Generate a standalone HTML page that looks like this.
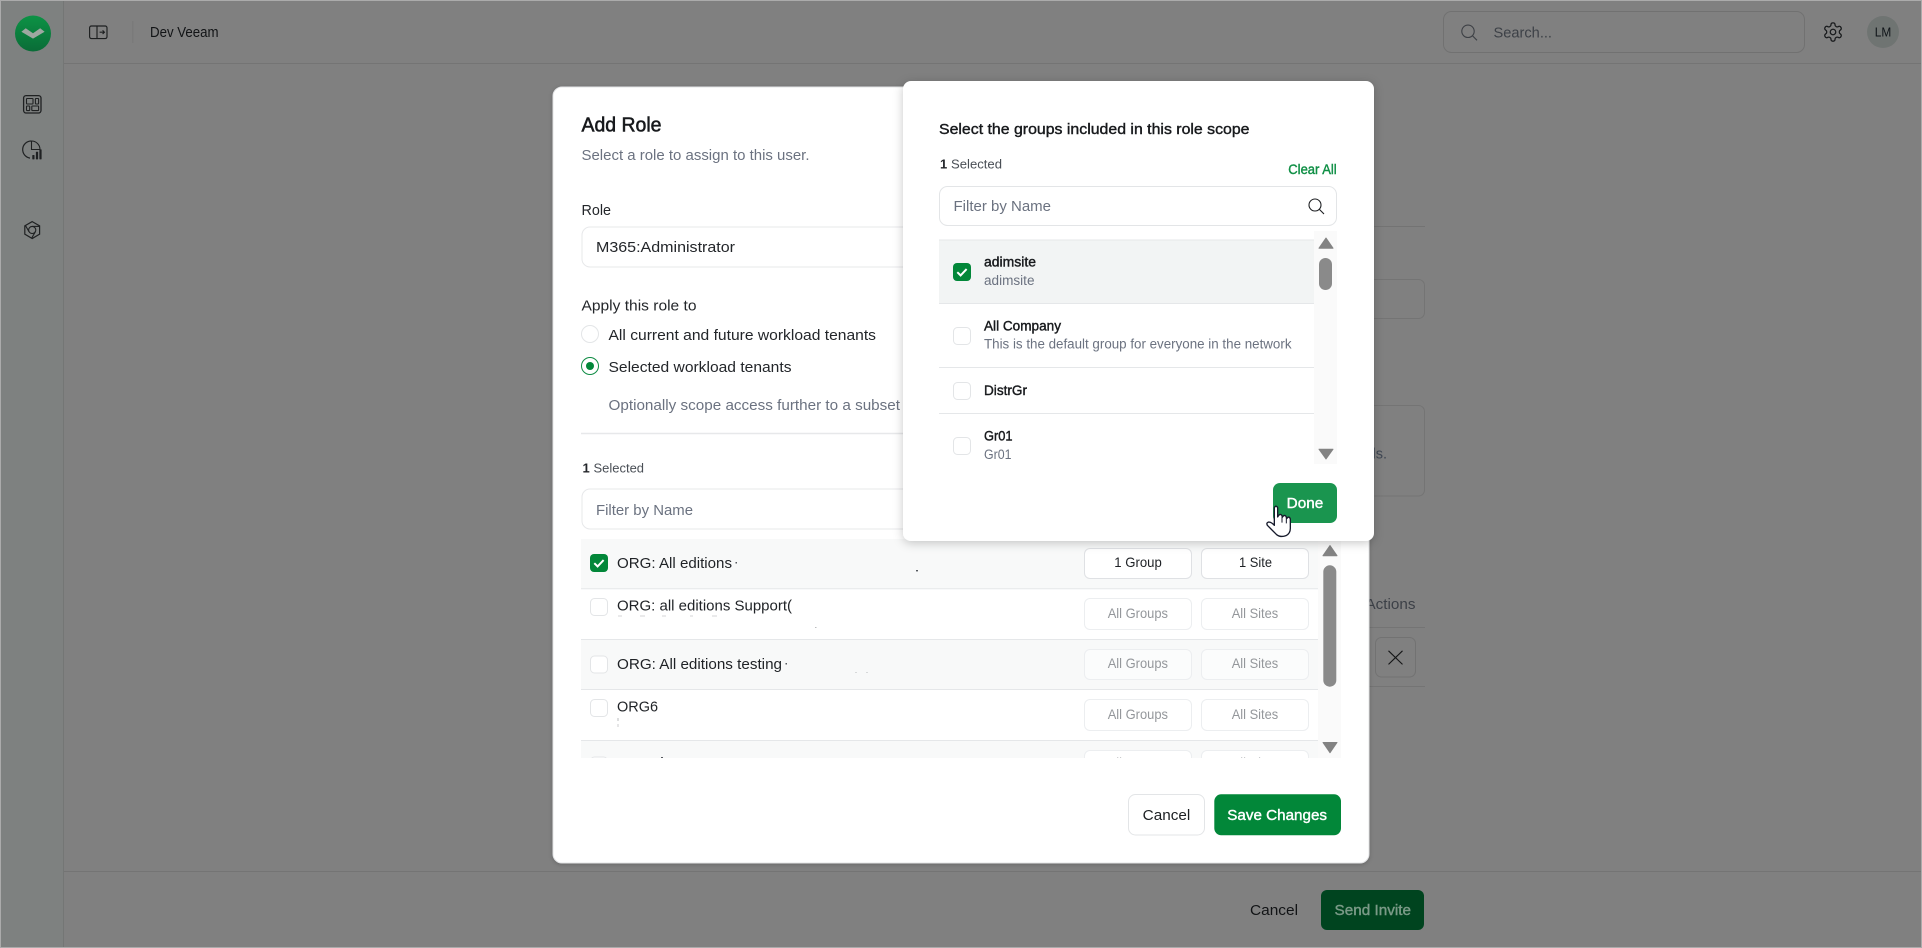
<!DOCTYPE html>
<html lang="en">
<head>
<meta charset="utf-8">
<title>Add Role</title>
<style>
html,body{margin:0;padding:0;width:1922px;height:948px;overflow:hidden;background:#808080}
svg{display:block;filter:blur(.3px)}
text{font-family:"Liberation Sans",Arial,sans-serif;white-space:pre}
.m{stroke-width:.4;paint-order:stroke}
</style>
</head>
<body>
<svg xmlns="http://www.w3.org/2000/svg" width="1922" height="948" viewBox="0 0 1922 948">
<defs>
<linearGradient id="lg" x1="0" y1="0" x2="0" y2="1"><stop offset="0" stop-color="#0c9245"/><stop offset="1" stop-color="#0a6c37"/></linearGradient>
<filter id="sh" x="-10%" y="-10%" width="120%" height="120%"><feDropShadow dx="0" dy="2" stdDeviation="5" flood-color="#000" flood-opacity=".22"/></filter>
<filter id="sh2" x="-5%" y="-5%" width="110%" height="110%"><feDropShadow dx="0" dy="1" stdDeviation="2" flood-color="#000" flood-opacity=".2"/></filter>
<clipPath id="listclip"><rect x="581" y="530" width="760" height="228"/></clipPath>
<clipPath id="popclip"><rect x="939" y="231" width="398" height="233"/></clipPath>
</defs>

<!-- page frame -->
<rect width="1922" height="948" fill="#808080"/>
<rect x="1" y="1" width="63" height="946" fill="#7e8180"/>
<line x1="63.5" y1="1" x2="63.5" y2="947" stroke="#747675"/>
<line x1="64" y1="63.5" x2="1921" y2="63.5" stroke="#747474"/>
<line x1="64" y1="871.5" x2="1921" y2="871.5" stroke="#747474"/>
<rect x=".5" y=".5" width="1921" height="947" fill="none" stroke="#ababab"/>

<!-- logo -->
<circle cx="33" cy="33.5" r="18" fill="url(#lg)"/>
<polygon points="21.4,31.7 25.7,28.3 33,33.3 40.2,28.3 44.6,31.7 33,38.6" fill="#9ea8a1"/>

<!-- sidebar icons -->
<g fill="none" stroke="#1f2122" stroke-width="1.1">
<rect x="23.6" y="95.6" width="17.4" height="17.4" rx="2.5" stroke-width="1.3"/>
<rect x="26.5" y="98.5" width="6.5" height="5.5" rx=".6"/>
<rect x="35.4" y="98.5" width="3.2" height="5.5" rx=".6"/>
<rect x="26.5" y="106" width="3.2" height="4.6" rx=".6"/>
<rect x="31.8" y="106" width="6.8" height="4.6" rx=".6"/>
<path d="M31 141a8.6 8.6 0 0 0-1 17.1" stroke-width="1.2"/>
<path d="M31.5 141a8.5 8.5 0 0 1 8.5 8.5h-8.5z"/>
<path d="M32.2 221.6l7.4 4.2v8.4l-7.4 4.3-7.4-4.3v-8.4z" stroke-width="1.2"/>
<circle cx="32.2" cy="230" r="3.6"/>
<path id="blade" d="M32.2 226.4L39.2 226.4"/>
<path d="M32.2 226.4L39.2 226.4" transform="rotate(120 32.2 230)"/>
<path d="M32.2 226.4L39.2 226.4" transform="rotate(240 32.2 230)"/>
</g>
<g fill="#1f2122">
<rect x="32.3" y="155" width="2.2" height="4.4" rx=".5"/>
<rect x="35.9" y="151.8" width="2.2" height="7.6" rx=".5"/>
<rect x="39.4" y="149.4" width="2.2" height="10" rx=".5"/>
</g>

<!-- header -->
<g fill="none" stroke="#1d1f20" stroke-width="1.15">
<rect x="89.6" y="26" width="17.4" height="12.6" rx="1.8"/>
<line x1="97" y1="26" x2="97" y2="38.6"/>
<path d="M99.6 32.2h4.7M102.6 30.4l1.8 1.8-1.8 1.8"/>
</g>
<line x1="132.8" y1="21" x2="132.8" y2="43" stroke="#777"/>
<text x="150" y="37" font-size="14.5" fill="#121416" textLength="68.6" lengthAdjust="spacingAndGlyphs">Dev Veeam</text>

<rect x="1443.5" y="11.5" width="361" height="41" rx="8" fill="#808080" stroke="#717171"/>
<g fill="none" stroke="#3d4045" stroke-width="1.1"><circle cx="1468" cy="31.3" r="6.2"/><line x1="1472.6" y1="35.9" x2="1477" y2="40.3"/></g>
<text x="1493.5" y="37.4" font-size="15" fill="#3d4147" textLength="58.5" lengthAdjust="spacingAndGlyphs">Search...</text>
<g transform="translate(1822,21) scale(.917)" fill="none" stroke="#191b1d" stroke-width="1.4">
<path d="M12.22 2h-.44a2 2 0 0 0-2 2v.18a2 2 0 0 1-1 1.73l-.43.25a2 2 0 0 1-2 0l-.15-.08a2 2 0 0 0-2.73.73l-.22.38a2 2 0 0 0 .73 2.73l.15.1a2 2 0 0 1 1 1.72v.51a2 2 0 0 1-1 1.74l-.15.09a2 2 0 0 0-.73 2.73l.22.38a2 2 0 0 0 2.73.73l.15-.08a2 2 0 0 1 2 0l.43.25a2 2 0 0 1 1 1.73V20a2 2 0 0 0 2 2h.44a2 2 0 0 0 2-2v-.18a2 2 0 0 1 1-1.73l.43-.25a2 2 0 0 1 2 0l.15.08a2 2 0 0 0 2.73-.73l.22-.39a2 2 0 0 0-.73-2.73l-.15-.08a2 2 0 0 1-1-1.74v-.5a2 2 0 0 1 1-1.74l.15-.09a2 2 0 0 0 .73-2.73l-.22-.38a2 2 0 0 0-2.73-.73l-.15.08a2 2 0 0 1-2 0l-.43-.25a2 2 0 0 1-1-1.73V4a2 2 0 0 0-2-2z"/>
<circle cx="12" cy="12" r="3"/>
</g>
<circle cx="1883" cy="32" r="16" fill="#6f7472"/>
<text x="1874.8" y="36.5" font-size="12.5" fill="#0f1418" textLength="16.5" lengthAdjust="spacingAndGlyphs">LM</text>

<!-- page background content -->
<line x1="1300" y1="226.5" x2="1425" y2="226.5" stroke="#737373"/>
<rect x="1300" y="279.5" width="124.5" height="39" rx="6" fill="none" stroke="#747474"/>
<rect x="1300" y="405.5" width="124.5" height="90.5" rx="6" fill="none" stroke="#747474"/>
<text x="1387" y="458.5" font-size="14.5" fill="#3f4753" text-anchor="end">ds.</text>
<text x="1365.5" y="609" font-size="15" fill="#3c4047" textLength="50" lengthAdjust="spacingAndGlyphs">Actions</text>
<line x1="1300" y1="627.5" x2="1425" y2="627.5" stroke="#747474"/>
<line x1="1300" y1="686.5" x2="1425" y2="686.5" stroke="#747474"/>
<rect x="1375.5" y="637.5" width="40" height="39.5" rx="6" fill="#808080" stroke="#727272"/>
<path d="M1388.5 650.8L1402.5 664.4M1402.5 650.8L1388.5 664.4" stroke="#141516" stroke-width="1.1" fill="none"/>

<text x="1250" y="914.8" font-size="15" fill="#121416" textLength="48" lengthAdjust="spacingAndGlyphs">Cancel</text>
<rect x="1321" y="890" width="103" height="40" rx="6" fill="#00441f"/>
<text x="1334.5" y="914.8" font-size="15" fill="#7a9a87" class="m" stroke="#7a9a87" textLength="76.5" lengthAdjust="spacingAndGlyphs">Send Invite</text>

<!-- modal -->
<rect x="553" y="87" width="816" height="776" rx="9" fill="#fff" stroke="#e3e4e6" stroke-width="1" filter="url(#sh2)"/>
<text x="581.5" y="131.7" font-size="20" fill="#17191c" stroke-width=".55" stroke="#17191c" textLength="80" lengthAdjust="spacingAndGlyphs">Add Role</text>
<text x="581.5" y="160" font-size="15" fill="#6b7280" textLength="228" lengthAdjust="spacingAndGlyphs">Select a role to assign to this user.</text>
<text x="581.5" y="215" font-size="15" fill="#23262a" textLength="29.5" lengthAdjust="spacingAndGlyphs">Role</text>
<rect x="582" y="227" width="759" height="40" rx="8" fill="#fff" stroke="#e7e8ea"/>
<text x="596" y="252" font-size="15" fill="#23262a" textLength="139" lengthAdjust="spacingAndGlyphs">M365:Administrator</text>
<text x="581.5" y="310.7" font-size="15" fill="#23262a" textLength="115" lengthAdjust="spacingAndGlyphs">Apply this role to</text>
<circle cx="590" cy="334" r="8.5" fill="#fff" stroke="#e3e5e7"/>
<text x="608.5" y="340" font-size="15" fill="#23262a" textLength="267.5" lengthAdjust="spacingAndGlyphs">All current and future workload tenants</text>
<circle cx="590" cy="366" r="8.5" fill="#fff" stroke="#0f8c44"/>
<circle cx="590" cy="366" r="4" fill="#028739"/>
<text x="608.5" y="372" font-size="15" fill="#23262a" textLength="183" lengthAdjust="spacingAndGlyphs">Selected workload tenants</text>
<text x="608.5" y="410" font-size="15" fill="#6b7280" textLength="291.5" lengthAdjust="spacingAndGlyphs">Optionally scope access further to a subset</text>
<line x1="581" y1="433.5" x2="1341" y2="433.5" stroke="#e7e8ea" stroke-width="1.5"/>
<text x="582.5" y="472.7" font-size="13" fill="#23262a" font-weight="700">1</text>
<text x="593.5" y="472.7" font-size="13" fill="#4a4f56" textLength="50.5" lengthAdjust="spacingAndGlyphs">Selected</text>
<rect x="582" y="489" width="759" height="40" rx="8" fill="#fff" stroke="#e7e8ea"/>
<text x="596" y="514.8" font-size="15" fill="#6b7280" textLength="97" lengthAdjust="spacingAndGlyphs">Filter by Name</text>

<!-- roles list -->
<g clip-path="url(#listclip)">
<rect x="581" y="539" width="737" height="49.5" fill="#f8f9f9"/>
<rect x="581" y="640" width="737" height="49.5" fill="#f8f9f9"/>
<rect x="581" y="741" width="737" height="20" fill="#f8f9f9"/>
<g stroke="#e5e7e9">
<line x1="581" y1="588.8" x2="1318" y2="588.8"/>
<line x1="581" y1="639.5" x2="1318" y2="639.5"/>
<line x1="581" y1="689.5" x2="1318" y2="689.5"/>
<line x1="581" y1="740.5" x2="1318" y2="740.5"/>
</g>
<rect x="590" y="554" width="18" height="18" rx="4" fill="#028739"/>
<path d="M594.3 563.2l3.3 3.2 6-6.3" fill="none" stroke="#fff" stroke-width="2"/>
<g fill="#fff" stroke="#e3e5e7">
<rect x="590.5" y="598.5" width="17" height="17" rx="4"/>
<rect x="590.5" y="656" width="17" height="17" rx="4"/>
<rect x="590.5" y="699.5" width="17" height="17" rx="4"/>
<rect x="590.5" y="757" width="17" height="17" rx="4"/>
</g>
<g font-size="15" fill="#1f2226">
<text x="617" y="568" textLength="115" lengthAdjust="spacingAndGlyphs">ORG: All editions</text>
<text x="617" y="610.7" textLength="175" lengthAdjust="spacingAndGlyphs">ORG: all editions Support(</text>
<text x="617" y="669" textLength="165" lengthAdjust="spacingAndGlyphs">ORG: All editions testing</text>
<text x="617" y="711.7" textLength="41" lengthAdjust="spacingAndGlyphs">ORG6</text>
</g>
<g fill="#55595f">
<rect x="735.5" y="562" width="1.5" height="1.5"/>
<rect x="785.5" y="663" width="1.5" height="1.5"/>
<rect x="916" y="570" width="2" height="1.4"/>
<rect x="815" y="627" width="1.5" height="1" opacity=".4"/>
<rect x="855" y="672" width="2" height="1" opacity=".2"/>
<rect x="866" y="672" width="2" height="1" opacity=".2"/>
<rect x="617.5" y="718" width="1" height="3" opacity=".4"/>
<rect x="617.5" y="724" width="1" height="3" opacity=".3"/>
<rect x="618" y="615.5" width="4" height="1" opacity=".25"/>
<rect x="640" y="615.5" width="5" height="1" opacity=".25"/>
<rect x="662" y="615.5" width="4" height="1" opacity=".25"/>
<rect x="690" y="615.5" width="3" height="1" opacity=".25"/>
<rect x="712" y="615.5" width="5" height="1" opacity=".25"/>
<rect x="661" y="757" width="2" height="1"/>
</g>
<g fill="#fff" stroke="#dfe1e4">
<rect x="1084.5" y="548.5" width="107" height="30" rx="5.5"/>
<rect x="1201.5" y="548.5" width="107" height="30" rx="5.5"/>
</g>
<g fill="#fff" stroke="#eceef0">
<rect x="1084.5" y="598.5" width="107" height="31" rx="5.5"/>
<rect x="1201.5" y="598.5" width="107" height="31" rx="5.5"/>
<rect x="1084.5" y="649.5" width="107" height="30" rx="5.5" fill="#fbfcfc"/>
<rect x="1201.5" y="649.5" width="107" height="30" rx="5.5" fill="#fbfcfc"/>
<rect x="1084.5" y="699.5" width="107" height="31" rx="5.5"/>
<rect x="1201.5" y="699.5" width="107" height="31" rx="5.5"/>
<rect x="1084.5" y="750.5" width="107" height="31" rx="5.5"/>
<rect x="1201.5" y="750.5" width="107" height="31" rx="5.5"/>
</g>
<g font-size="14" fill="#1f2226">
<text x="1114.3" y="566.8" textLength="47.5" lengthAdjust="spacingAndGlyphs">1 Group</text>
<text x="1239" y="566.8" textLength="33" lengthAdjust="spacingAndGlyphs">1 Site</text>
</g>
<g font-size="14" fill="#94979b">
<text x="1107.7" y="618.2" textLength="60.3" lengthAdjust="spacingAndGlyphs">All Groups</text>
<text x="1231.7" y="618.2" textLength="46.5" lengthAdjust="spacingAndGlyphs">All Sites</text>
<text x="1107.7" y="668.2" textLength="60.3" lengthAdjust="spacingAndGlyphs">All Groups</text>
<text x="1231.7" y="668.2" textLength="46.5" lengthAdjust="spacingAndGlyphs">All Sites</text>
<text x="1107.7" y="718.8" textLength="60.3" lengthAdjust="spacingAndGlyphs">All Groups</text>
<text x="1231.7" y="718.8" textLength="46.5" lengthAdjust="spacingAndGlyphs">All Sites</text>
<text x="1107.7" y="767.5" textLength="60.3" lengthAdjust="spacingAndGlyphs">All Groups</text>
<text x="1231.7" y="767.5" textLength="46.5" lengthAdjust="spacingAndGlyphs">All Sites</text>
</g>
<rect x="1318" y="535" width="23" height="223" fill="#fafafa"/>
<polygon points="1330,545.5 1337,555.7 1323,555.7" fill="#838383" stroke="#838383" stroke-linejoin="round"/>
<rect x="1323.3" y="565.3" width="13" height="121.4" rx="6.5" fill="#8a8a8a"/>
<polygon points="1323,742.5 1337,742.5 1330,752.7" fill="#838383" stroke="#838383" stroke-linejoin="round"/>
</g>

<!-- modal footer -->
<rect x="1128.5" y="794.5" width="76" height="40.5" rx="7" fill="#fff" stroke="#e3e5e7"/>
<text x="1142.7" y="820" font-size="15" fill="#1c1f22" textLength="47.6" lengthAdjust="spacingAndGlyphs">Cancel</text>
<rect x="1214.3" y="794.3" width="126.7" height="41" rx="7" fill="#028739"/>
<text x="1227.3" y="820" font-size="15" fill="#fff" class="m" stroke="#fff" textLength="99.7" lengthAdjust="spacingAndGlyphs">Save Changes</text>

<!-- popover -->
<rect x="903" y="81" width="471" height="460" rx="8" fill="#fff" filter="url(#sh)"/>
<text x="939" y="134" font-size="15" fill="#17191c" class="m" stroke="#17191c" textLength="310.5" lengthAdjust="spacingAndGlyphs">Select the groups included in this role scope</text>
<text x="940" y="168.5" font-size="13" fill="#23262a" font-weight="700">1</text>
<text x="951" y="168.5" font-size="13" fill="#4a4f56" textLength="51" lengthAdjust="spacingAndGlyphs">Selected</text>
<text x="1288.3" y="174" font-size="13.5" fill="#0f8f45" class="m" stroke="#0f8f45" textLength="48.4" lengthAdjust="spacingAndGlyphs">Clear All</text>
<rect x="939.5" y="186.5" width="397" height="39" rx="8" fill="#fff" stroke="#e3e5e7"/>
<text x="953.5" y="211" font-size="15" fill="#6b7280" textLength="97.5" lengthAdjust="spacingAndGlyphs">Filter by Name</text>
<g fill="none" stroke="#1e2023" stroke-width="1.1"><circle cx="1315" cy="205" r="6"/><line x1="1319.4" y1="209.4" x2="1324" y2="214"/></g>

<g clip-path="url(#popclip)">
<rect x="939" y="240" width="375" height="63.3" fill="#f2f4f4"/>
<g stroke="#e5e7e9">
<line x1="939" y1="240" x2="1314" y2="240"/>
<line x1="939" y1="303.5" x2="1314" y2="303.5"/>
<line x1="939" y1="367.5" x2="1314" y2="367.5"/>
<line x1="939" y1="413.5" x2="1314" y2="413.5"/>
</g>
<rect x="953" y="263" width="18" height="18" rx="4" fill="#028739"/>
<path d="M957.3 272.2l3.3 3.2 6-6.3" fill="none" stroke="#fff" stroke-width="2"/>
<g fill="#fff" stroke="#e3e5e7">
<rect x="953.5" y="327.5" width="17" height="17" rx="4"/>
<rect x="953.5" y="382.5" width="17" height="17" rx="4"/>
<rect x="953.5" y="437.5" width="17" height="17" rx="4"/>
</g>
<g font-size="13.5" fill="#17191c" class="m" stroke="#17191c">
<text x="984" y="266.7" textLength="52" lengthAdjust="spacingAndGlyphs">adimsite</text>
<text x="984" y="330.7" textLength="77" lengthAdjust="spacingAndGlyphs">All Company</text>
<text x="984" y="395" textLength="43" lengthAdjust="spacingAndGlyphs">DistrGr</text>
<text x="984" y="440.7" textLength="28.5" lengthAdjust="spacingAndGlyphs">Gr01</text>
</g>
<g font-size="13.5" fill="#6b7280">
<text x="984" y="285" textLength="50.5" lengthAdjust="spacingAndGlyphs">adimsite</text>
<text x="984" y="348.7" textLength="307.5" lengthAdjust="spacingAndGlyphs">This is the default group for everyone in the network</text>
<text x="984" y="459" textLength="27.5" lengthAdjust="spacingAndGlyphs">Gr01</text>
</g>
<rect x="1314" y="231" width="23" height="233" fill="#fafafa"/>
<polygon points="1326,238 1333,248.2 1319,248.2" fill="#838383" stroke="#838383" stroke-linejoin="round"/>
<rect x="1319" y="258" width="13" height="32" rx="6.5" fill="#8a8a8a"/>
<polygon points="1319,449.2 1333,449.2 1326,459" fill="#838383" stroke="#838383" stroke-linejoin="round"/>
</g>

<rect x="1273" y="483" width="64" height="40" rx="7" fill="#1a954f"/>
<text x="1286.7" y="508" font-size="15" fill="#fff" class="m" stroke="#fff" textLength="36.6" lengthAdjust="spacingAndGlyphs">Done</text>

<!-- hand cursor -->
<g transform="translate(1260,470) scale(.3333)">
<path d="M43 150L43 113Q48 104 53 113L53 141Q60 128 66 137L67 142Q74 131 79 141L80 146Q87 136 91 147L91 172Q92 190 78 197Q62 203 50 194L22 166Q18 158 26 156Q34 156 43 166Z" fill="#fff" stroke="#161a2b" stroke-width="4" stroke-linejoin="round"/>
<path d="M66 137L66 158M79 141L79 160" stroke="#161a2b" stroke-width="3" fill="none"/>
</g>
</svg>
</body>
</html>
